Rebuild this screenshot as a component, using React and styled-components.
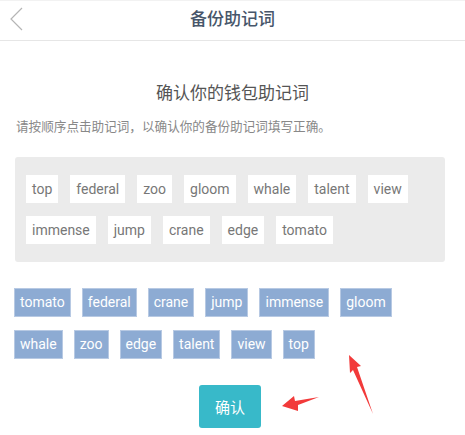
import React from 'react'
import styled, { createGlobalStyle } from 'styled-components'

const GlobalStyle = createGlobalStyle`
  body {
    margin: 0;
    background: #fff;
    font-family: Roboto, "Noto Sans CJK SC", sans-serif;
  }
`

const Page = styled.div`
  position: relative;
  width: 465px;
  height: 435px;
  overflow: hidden;
  background: #fff;
`

const Header = styled.div`
  position: relative;
  height: 41px;
  box-sizing: border-box;
  border-top: 1px solid #f2f2f2;
  border-bottom: 1px solid #e6e6e6;
  display: flex;
  align-items: center;
  justify-content: center;
`

const BackBtn = styled.svg`
  position: absolute;
  left: 0;
  top: 0;
`

const Title = styled.div`
  font-size: 17px;
  font-weight: 500;
  color: #47566a;
  margin-top: -6px;
`

const Heading = styled.h2`
  margin: 40px 0 0;
  text-align: center;
  font-size: 17px;
  line-height: 24px;
  font-weight: 400;
  color: #555;
`

const Hint = styled.p`
  margin: 13px 0 0 16px;
  font-size: 12.6px;
  line-height: 18px;
  color: #888;
`

const WordBox = styled.div`
  margin: 21px 20px 0 15px;
  padding: 18px 11px;
  background: #ebebeb;
  border-radius: 3px;
  display: flex;
  flex-wrap: wrap;
  gap: 13px 12px;
`

const Word = styled.span`
  height: 28px;
  line-height: 28px;
  padding: 0 6px;
  background: #fff;
  color: #777;
  font-size: 14px;
`

const Picked = styled.div`
  margin: 26px 0 0 14px;
  width: 400px;
  display: flex;
  flex-wrap: wrap;
  gap: 13px 11px;
`

const PickedWord = styled.span`
  height: 29px;
  line-height: 27px;
  padding: 0 5px;
  box-sizing: border-box;
  background: #8dabd3;
  border: 1px solid #b7c9e3;
  color: #fff;
  font-size: 14px;
`

const Footer = styled.div`
  display: flex;
  justify-content: center;
  margin-top: 26px;
  padding-right: 5px;
`

const ConfirmBtn = styled.button`
  width: 62px;
  height: 43px;
  border: none;
  border-radius: 3px;
  background: #38b9c9;
  color: #fff;
  font-size: 15px;
  font-family: "Noto Sans CJK SC", sans-serif;
`

const Arrows = styled.svg`
  position: absolute;
  left: 0;
  top: 0;
  pointer-events: none;
`

const pool = ['top', 'federal', 'zoo', 'gloom', 'whale', 'talent', 'view', 'immense', 'jump', 'crane', 'edge', 'tomato']
const picked = ['tomato', 'federal', 'crane', 'jump', 'immense', 'gloom', 'whale', 'zoo', 'edge', 'talent', 'view', 'top']

export default function App() {
  return (
    <Page>
      <GlobalStyle />
      <Header>
        <BackBtn width="40" height="40" viewBox="0 0 40 40">
          <polyline points="22,7 11,18 22,29" fill="none" stroke="#b5b5b5" strokeWidth="1.2" />
        </BackBtn>
        <Title>备份助记词</Title>
      </Header>
      <Heading>确认你的钱包助记词</Heading>
      <Hint>请按顺序点击助记词，以确认你的备份助记词填写正确。</Hint>
      <WordBox>
        {pool.map((w, i) => <Word key={i}>{w}</Word>)}
      </WordBox>
      <Picked>
        {picked.map((w, i) => <PickedWord key={i}>{w}</PickedWord>)}
      </Picked>
      <Footer>
        <ConfirmBtn>确认</ConfirmBtn>
      </Footer>
      <Arrows width="465" height="435" viewBox="0 0 465 435">
        <polygon points="282,406 294,396 295,401 319,397 298,405 298,411" fill="#f23a3a" />
        <polygon points="349,355 361,366 357,367 373,414 353,370 350,373" fill="#f23a3a" />
      </Arrows>
    </Page>
  )
}
